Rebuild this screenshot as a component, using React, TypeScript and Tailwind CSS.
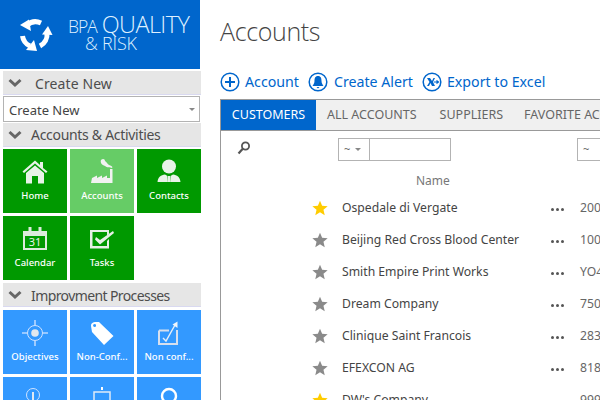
import React from "react";

function Chevron() {
  return (
    <svg width="14" height="10" viewBox="0 0 14 10" className="shrink-0">
      <path d="M1.5 2 L7 7 L12.5 2" fill="none" stroke="#666666" strokeWidth="3" />
    </svg>
  );
}

function Section({ label, indent }: { label: string; indent: string }) {
  return (
    <div className="h-[24px] bg-[#e6e6e6] border-b border-[#d9d9f0] flex items-center pl-[5px] text-[14px] text-[#4d4d4d] leading-none">
      <Chevron />
      <span className={indent}>{label}</span>
    </div>
  );
}

function Home() {
  return (
    <svg width="26" height="24" viewBox="0 0 26 24">
      <path d="M0.5 11.5 L13 0.5 L18 5 V2 H21 V8 L25.5 11.5 L24 13 L13 3.5 L2 13 Z" fill="#e8f3e8" />
      <path d="M4 13 L13 5.5 L22 13 V23.5 H16 V16 H10 V23.5 H4 Z" fill="#e8f3e8" />
    </svg>
  );
}
function Factory() {
  return (
    <svg width="24" height="26" viewBox="0 0 24 26">
      <path d="M11 2 C13 0 15 1 15 3 C17 4 17 6 19 7 C22 8 23 9 22 10 C20 9 17 10 15 8 C12 7 10 5 11 2 Z" fill="#f2f2f2" />
      <path d="M20 11 H22.5 V25 H1 L2 20 L7 17.5 V20 L12 17.5 V20 L17 17.5 V20 H20 Z" fill="#f2f2f2" />
    </svg>
  );
}
function Person() {
  return (
    <svg width="24" height="24" viewBox="0 0 24 24">
      <circle cx="12" cy="7.5" r="7" fill="#e8f3e8" />
      <path d="M0.5 23 C1 18 4 16 8 15.5 L10.5 17 V23 Z M23.5 23 C23 18 20 16 16 15.5 L13.5 17 V23 Z M11 17 H13 L13.4 23 H10.6 Z" fill="#e8f3e8" />
    </svg>
  );
}
function Calendar() {
  return (
    <div className="relative w-[24px] h-[24px]">
      <svg width="24" height="24" viewBox="0 0 24 24" className="absolute left-0 top-0">
        <path d="M0 4 H24 V23 H0 Z M2 9 V21 H22 V9 Z" fill="#dcebdc" fillRule="evenodd" />
        <rect x="5.5" y="0" width="3" height="7" fill="#dcebdc" />
        <rect x="15.5" y="0" width="3" height="7" fill="#dcebdc" />
      </svg>
      <span className="absolute left-0 right-0 top-[8px] text-center text-[11px] leading-[13px] text-[#e8f3e8]">31</span>
    </div>
  );
}
function Check() {
  return (
    <svg width="24" height="20" viewBox="0 0 24 20">
      <path d="M0 1 H19 V5 L17 6.5 V3 H2.5 V17 H17 V12 L19 10 V19.5 H0 Z" fill="#e6f0e6" />
      <path d="M6 8 L10 11 L23 2 L24 4 L10 15.5 L5 10.5 Z" fill="#e6f0e6" />
    </svg>
  );
}
function Target() {
  return (
    <svg width="26" height="26" viewBox="0 0 26 26">
      <circle cx="13" cy="13" r="7.5" fill="none" stroke="#cfe3ff" strokeWidth="1" />
      <circle cx="13" cy="13" r="3.8" fill="#e2e8ee" />
      <path d="M13 0 V5 M13 21 V26 M0 13 H5 M21 13 H26" stroke="#b9d8ff" strokeWidth="1.6" />
    </svg>
  );
}
function Tag() {
  return (
    <svg width="24" height="24" viewBox="0 0 24 24">
      <path fillRule="evenodd" fill="#ffffff" d="M1 5 C1 2 3 1 6 1 L9 1 L23.5 15 L14 24 L2 11 Z M4.5 3 A1.5 1.5 0 1 0 4.6 6 A1.5 1.5 0 1 0 4.5 3 Z" />
    </svg>
  );
}
function CheckUp() {
  return (
    <svg width="22" height="24" viewBox="0 0 22 24">
      <path d="M1 9.5 H11 M19 9 V23 H1 V9.5" fill="none" stroke="#d6dfee" strokeWidth="2" />
      <path d="M5 17 L8 20 L17 4" fill="none" stroke="#e6eef8" strokeWidth="1.4" />
      <path d="M14.5 3.5 L19.5 0.5 L19.5 7 Z" fill="#f0f5fb" />
    </svg>
  );
}
function Touch() {
  return (
    <svg width="18" height="26" viewBox="0 0 18 26">
      <circle cx="7" cy="8" r="6.5" fill="none" stroke="#cfe3ff" strokeWidth="1" />
      <path d="M6 5 H8 V14 H13 V22 H6 Z" fill="#dfe8f2" />
    </svg>
  );
}
function Box() {
  return (
    <svg width="18" height="26" viewBox="0 0 18 26">
      <rect x="8" y="0" width="2" height="3" fill="#ffffff" />
      <rect x="1" y="5" width="16" height="20" fill="none" stroke="#dfeaf8" strokeWidth="1.5" />
    </svg>
  );
}
function Ring() {
  return (
    <svg width="18" height="26" viewBox="0 0 18 26">
      <circle cx="9" cy="9" r="7" fill="none" stroke="#ffffff" strokeWidth="2.4" />
    </svg>
  );
}

function Tile({ label, icon, cls, iconTop }: { label: string; icon: React.ReactNode; cls: string; iconTop: string }) {
  return (
    <div className={`h-[64px] flex flex-col items-center overflow-hidden ${cls}`}>
      <div className={`h-[28px] flex items-start justify-center ${iconTop}`}>{icon}</div>
      <div className="mt-auto mb-[11px] text-[9.5px] leading-[12px] font-medium text-white whitespace-nowrap">{label}</div>
    </div>
  );
}

function Star({ on }: { on: boolean }) {
  return (
    <svg width="16" height="16" viewBox="0 0 24 24" className="shrink-0">
      <path d="M12 1 L15.2 8.6 L23.5 9.3 L17.2 14.7 L19.1 22.8 L12 18.5 L4.9 22.8 L6.8 14.7 L0.5 9.3 L8.8 8.6 Z" fill={on ? "#ffcc00" : "#8a8a8a"} />
    </svg>
  );
}

function CircleIcon({ children }: { children: React.ReactNode }) {
  return (
    <svg width="20" height="20" viewBox="0 0 20 20" className="shrink-0">
      <circle cx="10" cy="10" r="8.8" fill="none" stroke="#0066cc" strokeWidth="1.5" />
      {children}
    </svg>
  );
}

const rows: [string, string, boolean][] = [
  ["Ospedale di Vergate", "200", true],
  ["Beijing Red Cross Blood Center", "100", false],
  ["Smith Empire Print Works", "YO4", false],
  ["Dream Company", "750", false],
  ["Clinique Saint Francois", "283", false],
  ["EFEXCON AG", "818", false],
  ["DW's Company", "999", true],
];

const green = "bg-[#009900]";
const blue = "bg-[#3399ff]";

export default function App() {
  return (
    <div className="w-[600px] h-[400px] overflow-hidden bg-white flex font-['Noto_Sans',sans-serif]">
      <aside className="w-[201px] shrink-0 flex flex-col">
        <div className="h-[69px] w-[200px] bg-[#0066cc] flex items-center shrink-0">
          <svg width="34" height="34" viewBox="0 0 34 34" className="ml-[19px] shrink-0">
            <path d="M22 5 A13 13 0 0 0 8 7" fill="none" stroke="#ffffff" strokeWidth="5" />
            <path d="M1 7 L10 1.5 L12 13 Z" fill="#ffffff" />
            <path d="M21 28 A13 13 0 0 0 28 15" fill="none" stroke="#ffffff" strokeWidth="5" />
            <path d="M29 8 L33.5 17 L23 16.5 Z" fill="#ffffff" />
            <path d="M3.5 18 A13 13 0 0 0 11 28" fill="none" stroke="#ffffff" strokeWidth="5" />
            <path d="M18 33 L7 32 L15 22 Z" fill="#ffffff" />
          </svg>
          <div className="ml-[15px] pb-[4px] text-[#dff0ff] leading-none font-['Open_Sans',sans-serif] font-light">
            <div className="flex items-baseline h-[21px] whitespace-nowrap">
              <span className="text-[17.5px] tracking-[-1px]">BPA</span>
              <span className="text-[23.5px] ml-[5px] tracking-[-0.6px]">QUALITY</span>
            </div>
            <div className="text-[18px] ml-[17px] tracking-[-0.2px]">&amp; RISK</div>
          </div>
        </div>
        <div className="pl-[3px] pt-[2px] flex flex-col">
          <Section label="Create New" indent="pt-[2px] ml-[13px] tracking-[0.1px]" />
          <div className="h-[26px] w-[197px] mt-[1px] border border-[#b3b3b3] flex items-center justify-between pl-[5px] pr-[4px] text-[13px] text-[#444444]">
            <span className="pt-[3px]">Create New</span>
            <span className="w-0 h-0 border-l-[3px] border-r-[3px] border-t-[3px] border-l-transparent border-r-transparent border-t-[#888888]" />
          </div>
          <div className="mt-[1px]"><Section label="Accounts & Activities" indent="ml-[9px] tracking-[-0.3px]" /></div>
          <div className="grid grid-cols-[64px_64px_64px] gap-x-[3px] gap-y-[3px] mt-[2px]">
            <Tile label="Home" cls={green} iconTop="pt-[11px]" icon={<Home />} />
            <Tile label="Accounts" cls="bg-[#66cc66]" iconTop="pt-[9px]" icon={<Factory />} />
            <Tile label="Contacts" cls={green} iconTop="pt-[10px]" icon={<Person />} />
            <Tile label="Calendar" cls={green} iconTop="pt-[11px]" icon={<Calendar />} />
            <Tile label="Tasks" cls={green} iconTop="pt-[13px]" icon={<Check />} />
          </div>
          <div className="mt-[3px]"><Section label="Improvment Processes" indent="pt-[2px] ml-[9px] tracking-[-0.6px]" /></div>
          <div className="grid grid-cols-[64px_64px_64px] gap-x-[3px] gap-y-[3px] mt-[3px]">
            <Tile label="Objectives" cls={blue} iconTop="pt-[10px]" icon={<Target />} />
            <Tile label="Non-Conf..." cls={blue} iconTop="pt-[11px]" icon={<Tag />} />
            <Tile label="Non conf..." cls={blue} iconTop="pt-[11px]" icon={<CheckUp />} />
            <Tile label="" cls={blue} iconTop="pt-[10px]" icon={<Touch />} />
            <Tile label="" cls={blue} iconTop="pt-[10px]" icon={<Box />} />
            <Tile label="" cls={blue} iconTop="pt-[10px]" icon={<Ring />} />
          </div>
        </div>
      </aside>

      <main className="flex-1 min-w-0 pl-[19px] overflow-hidden">
        <h1 className="text-[25px] font-light leading-[32px] mt-[15px] text-[#444444] font-['Open_Sans',sans-serif] tracking-[-0.35px]">Accounts</h1>
        <div className="flex items-center h-[20px] mt-[25px] text-[14.2px] text-[#0066cc] leading-none whitespace-nowrap">
          <CircleIcon><path d="M10 5 V15 M5 10 H15" stroke="#0066cc" strokeWidth="2" /></CircleIcon>
          <span className="ml-[5px]">Account</span>
          <span className="ml-[9px]" />
          <CircleIcon>
            <path d="M10 4 C7 4 6.5 6.5 6.5 9 C6.5 11.5 5 13 4.5 14 H15.5 C15 13 13.5 11.5 13.5 9 C13.5 6.5 13 4 10 4 Z M8.5 15 H11.5 L10 16.5 Z" fill="#0066cc" />
          </CircleIcon>
          <span className="ml-[6px]">Create Alert</span>
          <span className="ml-[9px]" />
          <CircleIcon>
            <path d="M5 6 H8 L10 9 L11.5 6 H13 L11 10 L13 14 H10 L8.5 11 L7 14 H5 L7.5 10 Z" fill="#0066cc" />
            <path d="M12 10 H16 M14.5 8.5 L16.5 10 L14.5 11.5" fill="none" stroke="#0066cc" strokeWidth="1.2" />
          </CircleIcon>
          <span className="ml-[5px]">Export to Excel</span>
        </div>
        <section className="mt-[7px] border-l border-t border-[#999999] w-[400px]">
          <div className="h-[31px] flex bg-[#f0f0f0] border-b border-[#999999] text-[12.5px] whitespace-nowrap text-[#666666] items-stretch">
            <div className="w-[95px] bg-[#0066cc] text-white flex items-center justify-center shrink-0">CUSTOMERS</div>
            <div className="ml-[11px] flex items-center">ALL ACCOUNTS</div>
            <div className="ml-[23px] flex items-center">SUPPLIERS</div>
            <div className="ml-[21px] flex items-center">FAVORITE ACCOUNTS</div>
          </div>
          <div className="h-[31px] mt-[7px] flex items-start">
            <svg width="14" height="14" viewBox="0 0 14 14" className="ml-[16px] mt-[3px] shrink-0">
              <circle cx="8.5" cy="5" r="3.6" fill="none" stroke="#555555" strokeWidth="1.8" />
              <path d="M6 7.5 L1.5 12.5" stroke="#555555" strokeWidth="2.2" />
            </svg>
            <div className="ml-[87px] w-[113px] h-[23px] border border-[#b3b3b3] flex shrink-0">
              <div className="w-[31px] border-r border-[#b3b3b3] flex items-center pl-[5px] gap-[5px] text-[11px] text-[#666666]">
                <span>~</span>
                <span className="w-0 h-0 border-l-[3px] border-r-[3px] border-t-[3px] border-l-transparent border-r-transparent border-t-[#888888]" />
              </div>
            </div>
            <div className="ml-[126px] w-[60px] h-[23px] border border-[#b3b3b3] flex items-center pl-[5px] text-[11px] text-[#666666] shrink-0">~</div>
          </div>
          <div className="h-[18px] flex text-[12px] text-[#777777] leading-[18px] mt-[3px]">
            <span className="ml-[195px]">Name</span>
          </div>
          <div className="mt-[2px]">
            {rows.map(([name, code, on]) => (
              <div key={name} className="h-[32px] flex items-center whitespace-nowrap text-[12.2px] text-[#444444]">
                <div className="ml-[91px] w-[30px] shrink-0 flex"><Star on={on} /></div>
                <div className="w-[209px] shrink-0">{name}</div>
                <div className="w-[29px] shrink-0 flex gap-[2px] items-center mt-[2px]">
                  <span className="w-[3px] h-[3px] rounded-full bg-[#555555]" />
                  <span className="w-[3px] h-[3px] rounded-full bg-[#555555]" />
                  <span className="w-[3px] h-[3px] rounded-full bg-[#555555]" />
                </div>
                <div className="text-[#666666]">{code}</div>
              </div>
            ))}
          </div>
        </section>
      </main>
    </div>
  );
}
